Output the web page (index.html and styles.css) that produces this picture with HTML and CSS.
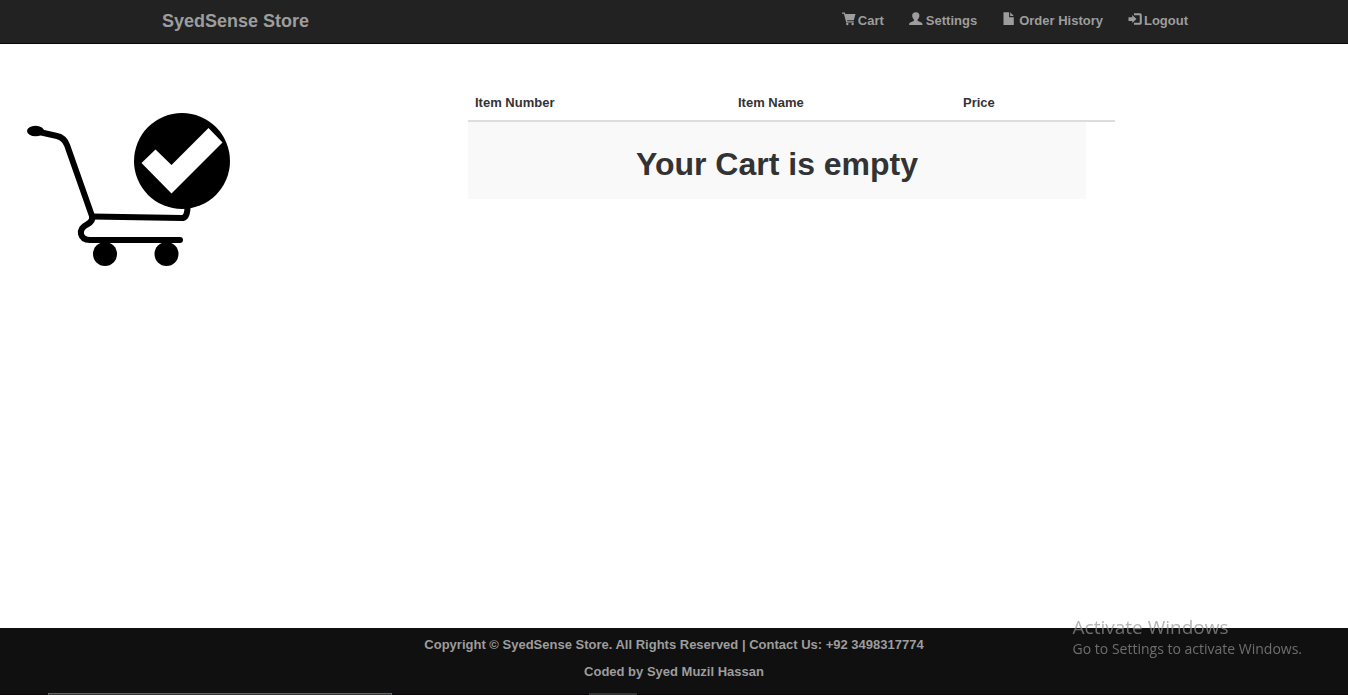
FILE: index.html
```html
<!DOCTYPE html>
<html lang="en">
<head>
<meta charset="utf-8">
<title>SyedSense Store</title>
<link rel="stylesheet" href="styles.css">
</head>
<body>
<header class="navbar">
  <div class="container">
    <a class="brand" href="#">SyedSense Store</a>
    <nav class="menu">
      <a class="menu-link" href="#"><svg class="icon" viewBox="0 0 14 14" aria-hidden="true"><path d="M0 .5h2.800l.6 1.500H13.500L11.800 8.200H5l.3 1h6.500v1.300H4.200L1.900 1.700H0z"/><circle cx="5.300" cy="12" r="1.200"/><circle cx="10.600" cy="12" r="1.200"/></svg>Cart</a>
      <a class="menu-link menu-link-wide" href="#"><svg class="icon" viewBox="0 0 14 14" aria-hidden="true"><path d="M6.800.2C9.300.2 10.500 1.600 10.400 3.700 10.300 5.500 9.500 6.700 8.700 7.500c-.3.4-.2 1.300.3 1.600l3.300 1.500c.8.400 1.200 1.100 1.200 2.400H.1c0-1.300.4-2 1.200-2.400l3.300-1.500c.5-.3.6-1.200.3-1.600C4.100 6.700 3.300 5.500 3.200 3.700 3.100 1.600 4.300.2 6.800.2z"/></svg>Settings</a>
      <a class="menu-link menu-link-wide" href="#"><svg class="icon" viewBox="0 0 14 14" aria-hidden="true"><path d="M1.500.2h5.600v5h4.700V13H1.500z"/><path d="M8.200.2l3.600 3.900H8.200z"/></svg>Order History</a>
      <a class="menu-link" href="#"><svg class="icon" viewBox="0 0 14 14" aria-hidden="true"><path d="M4.200 3.100l4.300 4-4.300 4V8.900H.5V5.300h3.700z"/><path d="M6 1.200h6a1.800 1.800 0 0 1 1.800 1.800v8a1.800 1.800 0 0 1-1.800 1.800H6v-2h5.700V3.200H6z"/></svg>Logout</a>
    </nav>
  </div>
</header>

<main class="content">
  <svg class="cart-art" viewBox="15 100 230 180" role="img" aria-label="Shopping cart with a tick">
    <ellipse cx="35.500" cy="131" rx="8.500" ry="5.200"/>
    <g class="cart-frame">
      <path d="M37 131.500L57 136Q64 137.500 67 145L92 216Q93.500 221 87 224.500Q80 228 81 234Q82.500 240 90 240H180"/>
      <path d="M92 216.500L182 218Q187 218 187.500 208"/>
    </g>
    <circle cx="105" cy="254" r="12"/>
    <circle cx="166.500" cy="254" r="12"/>
    <circle cx="182" cy="161" r="48"/>
    <path class="cart-tick" d="M141.500 163L155.500 149.500L171.500 165L208.500 128L222.500 142.500L171.500 193.500z"/>
  </svg>

  <table class="items">
    <colgroup><col class="col-number"><col class="col-name"><col class="col-price"><col class="col-action"></colgroup>
    <thead>
      <tr><th scope="col">Item Number</th><th scope="col">Item Name</th><th scope="col">Price</th><td></td></tr>
    </thead>
    <tbody>
      <tr><td class="empty" colspan="3"><h1 class="empty-title">Your Cart is empty</h1></td></tr>
    </tbody>
  </table>
</main>

<footer class="footer">
  <p class="footer-line">Copyright © SyedSense Store. All Rights Reserved | Contact Us: +92 3498317774</p>
  <p class="footer-line">Coded by Syed Muzil Hassan</p>
</footer>

<div class="taskbar"><span class="task-search"></span><span class="task-item"></span></div>
<aside class="watermark">
  <div class="watermark-title">Activate Windows</div>
  <div class="watermark-text">Go to Settings to activate Windows.</div>
</aside>
</body>
</html>
```
FILE: styles.css
```css
* {
  box-sizing: border-box;
}

body {
  display: flex;
  flex-direction: column;
  min-height: 100vh;
  margin: 0;
  background: #fff;
  color: #333;
  font: bold 13px/18px "Liberation Sans", Arial, sans-serif;
}

.navbar {
  background: #222;
  border-bottom: 1px solid #080808;
}

.container {
  display: flex;
  justify-content: space-between;
  max-width: 1052px;
  margin: 0 auto;
  padding: 12px 12px 13px 14px;
}

.brand {
  color: #9d9d9d;
  font-size: 18px;
  text-decoration: none;
}

.menu {
  display: flex;
  gap: 25px;
}

.menu-link {
  display: flex;
  gap: 2px;
  color: #9d9d9d;
  text-decoration: none;
}

.menu-link-wide {
  gap: 3px;
}

.icon {
  width: 14px;
  height: 14px;
  fill: #9d9d9d;
}

.content {
  display: grid;
  grid-template-columns: 230px minmax(0, 647px);
  column-gap: 223px;
  align-items: start;
  flex: 1;
  padding: 40px 15px 0;
}

.cart-art {
  width: 100%;
  margin-top: 16px;
}

.cart-frame {
  fill: none;
  stroke: #000;
  stroke-width: 6;
  stroke-linecap: round;
  stroke-linejoin: round;
}

.cart-tick {
  fill: #fff;
}

.items {
  width: 100%;
  table-layout: fixed;
  border-collapse: separate;
  border-spacing: 0;
}

.col-number {
  width: 263px;
}

.col-name {
  width: 225px;
}

.col-price {
  width: 130px;
}

.items th,
.items td {
  padding: 10px 7px 8px;
  text-align: left;
}

.items thead th,
.items thead td {
  border-bottom: 2px solid #ddd;
}

.items .empty {
  padding: 24px 7px 17px;
  background: #f9f9f9;
  text-align: center;
}

.empty-title {
  margin: 0;
  font-size: 32px;
  line-height: 36px;
}

.footer {
  padding: 8px 0 14px;
  background: #101010;
  color: #9d9d9d;
  text-align: center;
}

.footer-line {
  margin: 0 0 9px;
}

.footer-line:last-child {
  margin: 0;
}

.taskbar {
  position: fixed;
  right: 0;
  bottom: 0;
  left: 0;
  display: flex;
  gap: 197px;
  height: 2px;
  padding-left: 48px;
  background: linear-gradient(#101010 50%, #0a0508 50%);
}

.task-search {
  width: 344px;
  border: 1px solid #666;
  border-bottom: 0;
  background: #333;
}

.task-item {
  width: 48px;
  background: #333;
}

.watermark {
  position: fixed;
  right: 46px;
  bottom: 35px;
  color: rgba(150, 150, 150, 0.7);
  font: 14px/22px "Open Sans", "Noto Sans", sans-serif;
}

.watermark-title {
  font-size: 19px;
}
```
